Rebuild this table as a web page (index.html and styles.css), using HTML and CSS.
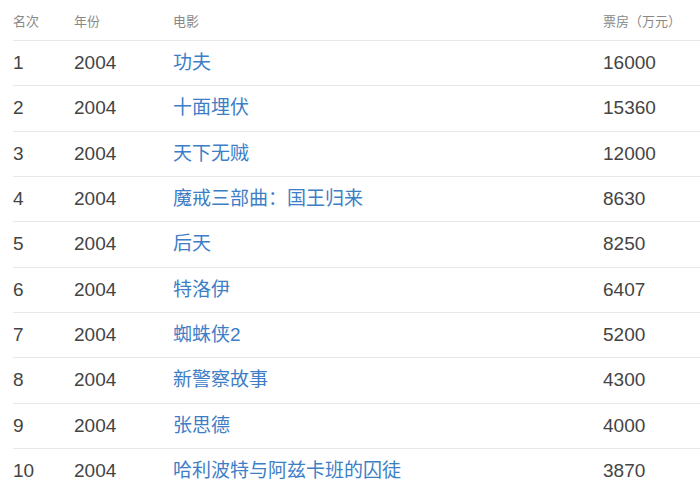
FILE: index.html
```html
<!DOCTYPE html>
<html lang="zh">
<head>
<meta charset="utf-8">
<title>2004 票房</title>
<link rel="stylesheet" href="styles.css">
</head>
<body>
<div class="table">
  <div class="row head">
    <div>名次</div><div>年份</div><div>电影</div><div>票房（万元）</div>
  </div>
  <div class="row"><div>1</div><div>2004</div><div><a href="#">功夫</a></div><div>16000</div></div>
  <div class="row"><div>2</div><div>2004</div><div><a href="#">十面埋伏</a></div><div>15360</div></div>
  <div class="row"><div>3</div><div>2004</div><div><a href="#">天下无贼</a></div><div>12000</div></div>
  <div class="row"><div>4</div><div>2004</div><div><a href="#">魔戒三部曲：国王归来</a></div><div>8630</div></div>
  <div class="row"><div>5</div><div>2004</div><div><a href="#">后天</a></div><div>8250</div></div>
  <div class="row"><div>6</div><div>2004</div><div><a href="#">特洛伊</a></div><div>6407</div></div>
  <div class="row"><div>7</div><div>2004</div><div><a href="#">蜘蛛侠2</a></div><div>5200</div></div>
  <div class="row"><div>8</div><div>2004</div><div><a href="#">新警察故事</a></div><div>4300</div></div>
  <div class="row"><div>9</div><div>2004</div><div><a href="#">张思德</a></div><div>4000</div></div>
  <div class="row last"><div>10</div><div>2004</div><div><a href="#">哈利波特与阿兹卡班的囚徒</a></div><div>3870</div></div>
</div>
</body>
</html>
```
FILE: styles.css
```css
html, body {
  margin: 0;
  padding: 0;
  background: #ffffff;
}
body {
  font-family: "Liberation Sans", "Noto Sans CJK SC", sans-serif;
  color: #444444;
  overflow: hidden;
}
.table {
  margin-left: 13px;
  width: 720px;
}
.row {
  display: grid;
  grid-template-columns: 61px 99px 430px 1fr;
  align-items: center;
  height: 44.33px;
  border-bottom: 1px solid #e8e8e8;
  font-size: 19px;
  line-height: 24px;
  white-space: nowrap;
}
.row.head {
  height: 40px;
  align-items: start;
  padding-top: 0;
  font-size: 13px;
  line-height: 16px;
  color: #888888;
}
.row.head > div {
  padding-top: 14px;
}
.row.last {
  border-bottom: none;
}
.row a {
  color: #3d7ec6;
  text-decoration: none;
}
```
